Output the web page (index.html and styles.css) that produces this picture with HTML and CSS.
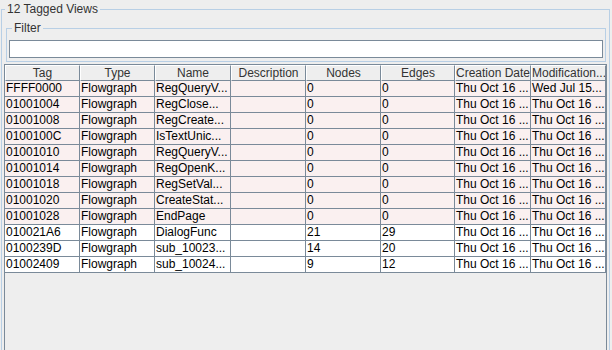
FILE: index.html
```html
<!DOCTYPE html>
<html lang="en">
<head>
  <meta charset="UTF-8" />
  <title>Tagged Views</title>
  <link rel="stylesheet" href="styles.css">
</head>
<body>
<fieldset class="group">
  <legend>12 Tagged Views</legend>
  <fieldset class="filter">
    <legend>Filter</legend>
    <input type="text" class="filter-input" />
  </fieldset>
  <div class="scroll-pane">
    <table class="views">
      <colgroup>
        <col class="c75"><col class="c75"><col class="c76"><col class="c75">
        <col class="c75"><col class="c74"><col class="c76"><col class="c75">
      </colgroup>
      <thead>
        <tr>
          <th>Tag</th><th>Type</th><th>Name</th><th>Description</th>
          <th>Nodes</th><th>Edges</th><th>Creation Date</th><th>Modification...</th>
        </tr>
      </thead>
      <tbody>
        <tr class="empty"><td>FFFF0000</td><td>Flowgraph</td><td>RegQueryV...</td><td></td><td>0</td><td>0</td><td>Thu Oct 16 ...</td><td>Wed Jul 15...</td></tr>
        <tr class="empty"><td>01001004</td><td>Flowgraph</td><td>RegClose...</td><td></td><td>0</td><td>0</td><td>Thu Oct 16 ...</td><td>Thu Oct 16 ...</td></tr>
        <tr class="empty"><td>01001008</td><td>Flowgraph</td><td>RegCreate...</td><td></td><td>0</td><td>0</td><td>Thu Oct 16 ...</td><td>Thu Oct 16 ...</td></tr>
        <tr class="empty"><td>0100100C</td><td>Flowgraph</td><td>IsTextUnic...</td><td></td><td>0</td><td>0</td><td>Thu Oct 16 ...</td><td>Thu Oct 16 ...</td></tr>
        <tr class="empty"><td>01001010</td><td>Flowgraph</td><td>RegQueryV...</td><td></td><td>0</td><td>0</td><td>Thu Oct 16 ...</td><td>Thu Oct 16 ...</td></tr>
        <tr class="empty"><td>01001014</td><td>Flowgraph</td><td>RegOpenK...</td><td></td><td>0</td><td>0</td><td>Thu Oct 16 ...</td><td>Thu Oct 16 ...</td></tr>
        <tr class="empty"><td>01001018</td><td>Flowgraph</td><td>RegSetVal...</td><td></td><td>0</td><td>0</td><td>Thu Oct 16 ...</td><td>Thu Oct 16 ...</td></tr>
        <tr class="empty"><td>01001020</td><td>Flowgraph</td><td>CreateStat...</td><td></td><td>0</td><td>0</td><td>Thu Oct 16 ...</td><td>Thu Oct 16 ...</td></tr>
        <tr class="empty"><td>01001028</td><td>Flowgraph</td><td>EndPage</td><td></td><td>0</td><td>0</td><td>Thu Oct 16 ...</td><td>Thu Oct 16 ...</td></tr>
        <tr><td>010021A6</td><td>Flowgraph</td><td>DialogFunc</td><td></td><td>21</td><td>29</td><td>Thu Oct 16 ...</td><td>Thu Oct 16 ...</td></tr>
        <tr><td>0100239D</td><td>Flowgraph</td><td>sub_10023...</td><td></td><td>14</td><td>20</td><td>Thu Oct 16 ...</td><td>Thu Oct 16 ...</td></tr>
        <tr><td>01002409</td><td>Flowgraph</td><td>sub_10024...</td><td></td><td>9</td><td>12</td><td>Thu Oct 16 ...</td><td>Thu Oct 16 ...</td></tr>
      </tbody>
    </table>
  </div>
</fieldset>
</body>
</html>
```

FILE: styles.css
```css
html, body {
  height: 350px;
}
body {
  margin: 0;
  background: #eeeeee;
  color: #333333;
  font-family: "Liberation Sans", Arial, sans-serif;
  font-size: 12px;
  overflow: hidden;
}

fieldset {
  border: 1px solid #b8cfe5;
  min-width: 0;
  padding: 0;
}
legend {
  margin-left: 3px;
  padding: 0 2px;
  line-height: 14px;
}

/* outer titled panel, its bottom edge sits just below the window */
.group {
  display: flex;
  flex-direction: column;
  box-sizing: border-box;
  height: 351px;
  margin: 2px 2px 0 1px;
}

.filter {
  margin: 4px 3px 0 4px;
  padding: 4px 2px 3px 2px;
}
.filter legend {
  line-height: 16px;
}
.filter-input {
  display: block;
  box-sizing: border-box;
  width: 100%;
  height: 18px;
  margin: 0;
  border: 1px solid #7a8a99;
  background: #ffffff;
}

.scroll-pane {
  flex: 1;
  min-height: 0;
  margin: 2px 2px 0 2px;
  border: 1px solid #7a8a99;
  border-bottom: none;
  background: #eeeeee;
  overflow: hidden;
}

.views {
  table-layout: fixed;
  border-collapse: separate;
  border-spacing: 0;
  width: 601px;
  font-size: 12px;
}
.c74 { width: 74px; }
.c75 { width: 75px; }
.c76 { width: 76px; }

.views th {
  box-sizing: border-box;
  height: 16px;
  padding: 0;
  font-weight: normal;
  line-height: 14px;
  text-align: center;
  color: #333333;
  background: #eeeeee;
  border-top: 1px solid #ffffff;
  border-left: 1px solid #ffffff;
  border-right: 1px solid #7a8a99;
  border-bottom: 1px solid #7a8a99;
  white-space: nowrap;
  overflow: hidden;
}
.views td {
  box-sizing: border-box;
  height: 16px;
  padding: 0 0 0 1px;
  line-height: 15px;
  color: #000000;
  background: #ffffff;
  border-right: 1px solid #7a8a99;
  border-bottom: 1px solid #7a8a99;
  white-space: nowrap;
  overflow: hidden;
}
.views tr.empty td {
  background: #faf0f0;
}
```
